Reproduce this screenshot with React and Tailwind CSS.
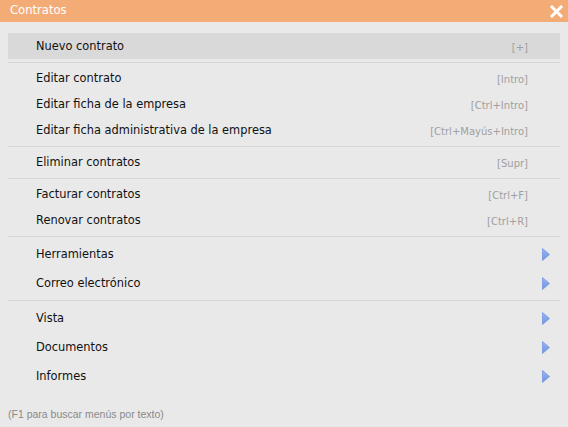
import { useState } from "react";

const groups = [
  [{ label: "Nuevo contrato", key: "[+]", active: true }],
  [
    { label: "Editar contrato", key: "[Intro]" },
    { label: "Editar ficha de la empresa", key: "[Ctrl+Intro]" },
    { label: "Editar ficha administrativa de la empresa", key: "[Ctrl+Mayús+Intro]" },
  ],
  [{ label: "Eliminar contratos", key: "[Supr]" }],
  [
    { label: "Facturar contratos", key: "[Ctrl+F]" },
    { label: "Renovar contratos", key: "[Ctrl+R]" },
  ],
  [
    { label: "Herramientas", sub: true },
    { label: "Correo electrónico", sub: true },
  ],
  [
    { label: "Vista", sub: true },
    { label: "Documentos", sub: true },
    { label: "Informes", sub: true },
  ],
];

function Arrow() {
  return (
    <svg width="8" height="13" viewBox="0 0 8 13" className="mr-[10px]">
      <defs>
        <linearGradient id="ag" x1="0" y1="0" x2="0" y2="1">
          <stop offset="0" stopColor="#9bb6f0" />
          <stop offset="1" stopColor="#6f93e2" />
        </linearGradient>
      </defs>
      <path d="M0.5 0.5 L7.5 6.5 L0.5 12.5 Z" fill="url(#ag)" stroke="#7897e0" strokeWidth="0.8" />
    </svg>
  );
}

function Row({ item }) {
  const [hover, setHover] = useState(false);
  const on = item.active || hover;
  return (
    <div
      onMouseEnter={() => setHover(true)}
      onMouseLeave={() => setHover(false)}
      className={`flex items-center justify-between pl-[28px] pt-[2px] ${item.sub ? "h-[29px]" : "h-[26px]"} ${on ? "bg-[#d9d9d9]" : ""}`}
    >
      <span className="text-[11.4px] text-[#111]">{item.label}</span>
      {item.sub ? <Arrow /> : <span className="mr-[32px] text-[10px] text-[#a0a0a0]">{item.key}</span>}
    </div>
  );
}

export default function App() {
  return (
    <div
      className="flex h-[427px] w-[568px] flex-col bg-[#e9e9e9]"
      style={{ fontFamily: "Tahoma, 'DejaVu Sans', Verdana, sans-serif" }}
    >
      <div className="flex h-[22px] items-center justify-between bg-[#f4ac76] pl-[10px] pr-[5px]">
        <span className="text-[11.6px] text-white">Contratos</span>
        <svg width="13" height="13" viewBox="0 0 13 13">
          <path d="M2 2 L11 11 M11 2 L2 11" stroke="#fff" strokeWidth="3" strokeLinecap="square" />
        </svg>
      </div>
      <div className="mx-[8px] mt-[11px]">
        {groups.map((g, i) => (
          <div key={i}>
            {i > 0 && <div className="mb-[2px] mt-[3px] h-px bg-[#d6d6d6]" />}
            {g.map((item) => (
              <Row key={item.label} item={item} />
            ))}
          </div>
        ))}
      </div>
      <div
        className="mt-auto mb-[4px] pl-[8px] text-[10.5px] text-[#8a8a8a]"
        style={{ fontFamily: "'Liberation Sans', Arial, sans-serif" }}
      >
        (F1 para buscar menús por texto)
      </div>
    </div>
  );
}
